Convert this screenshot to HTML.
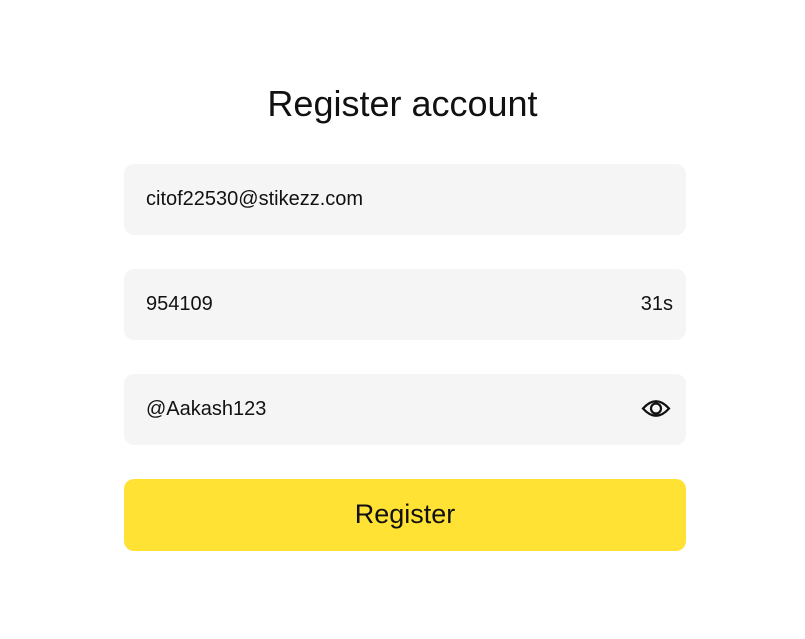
<!DOCTYPE html>
<html><head><style>
body{margin:0;width:805px;height:639px;background:#fff;font-family:"Liberation Sans",Arial,sans-serif;position:relative;}
h1{position:absolute;top:83px;left:0;width:805px;text-align:center;margin:0;font-weight:400;font-size:36px;color:#111;}
.f{position:absolute;left:124px;width:562px;height:71px;background:#f5f5f5;border-radius:10px;box-sizing:border-box;padding-left:22px;font-size:20px;color:#111;line-height:70px;}
.r{position:absolute;right:13px;top:0;}
.b{position:absolute;left:124px;top:479px;width:562px;height:72px;background:#ffe234;border-radius:10px;text-align:center;line-height:70px;font-size:27px;color:#111;}
</style></head><body>
<h1>Register account</h1>
<div class="f" style="top:164px">citof22530@stikezz.com</div>
<div class="f" style="top:269px">954109<span class="r">31s</span></div>
<div class="f" style="top:374px">@Aakash123
<svg style="position:absolute;right:15px;top:23px" width="30" height="23" viewBox="0 0 30 23"><path d="M2 11.5 Q15 -3 28 11.5 Q15 26 2 11.5Z" fill="none" stroke="#111" stroke-width="2.2"/><circle cx="15" cy="11.5" r="5" fill="none" stroke="#111" stroke-width="2.2"/></svg></div>
<div class="b">Register</div>
</body></html>
